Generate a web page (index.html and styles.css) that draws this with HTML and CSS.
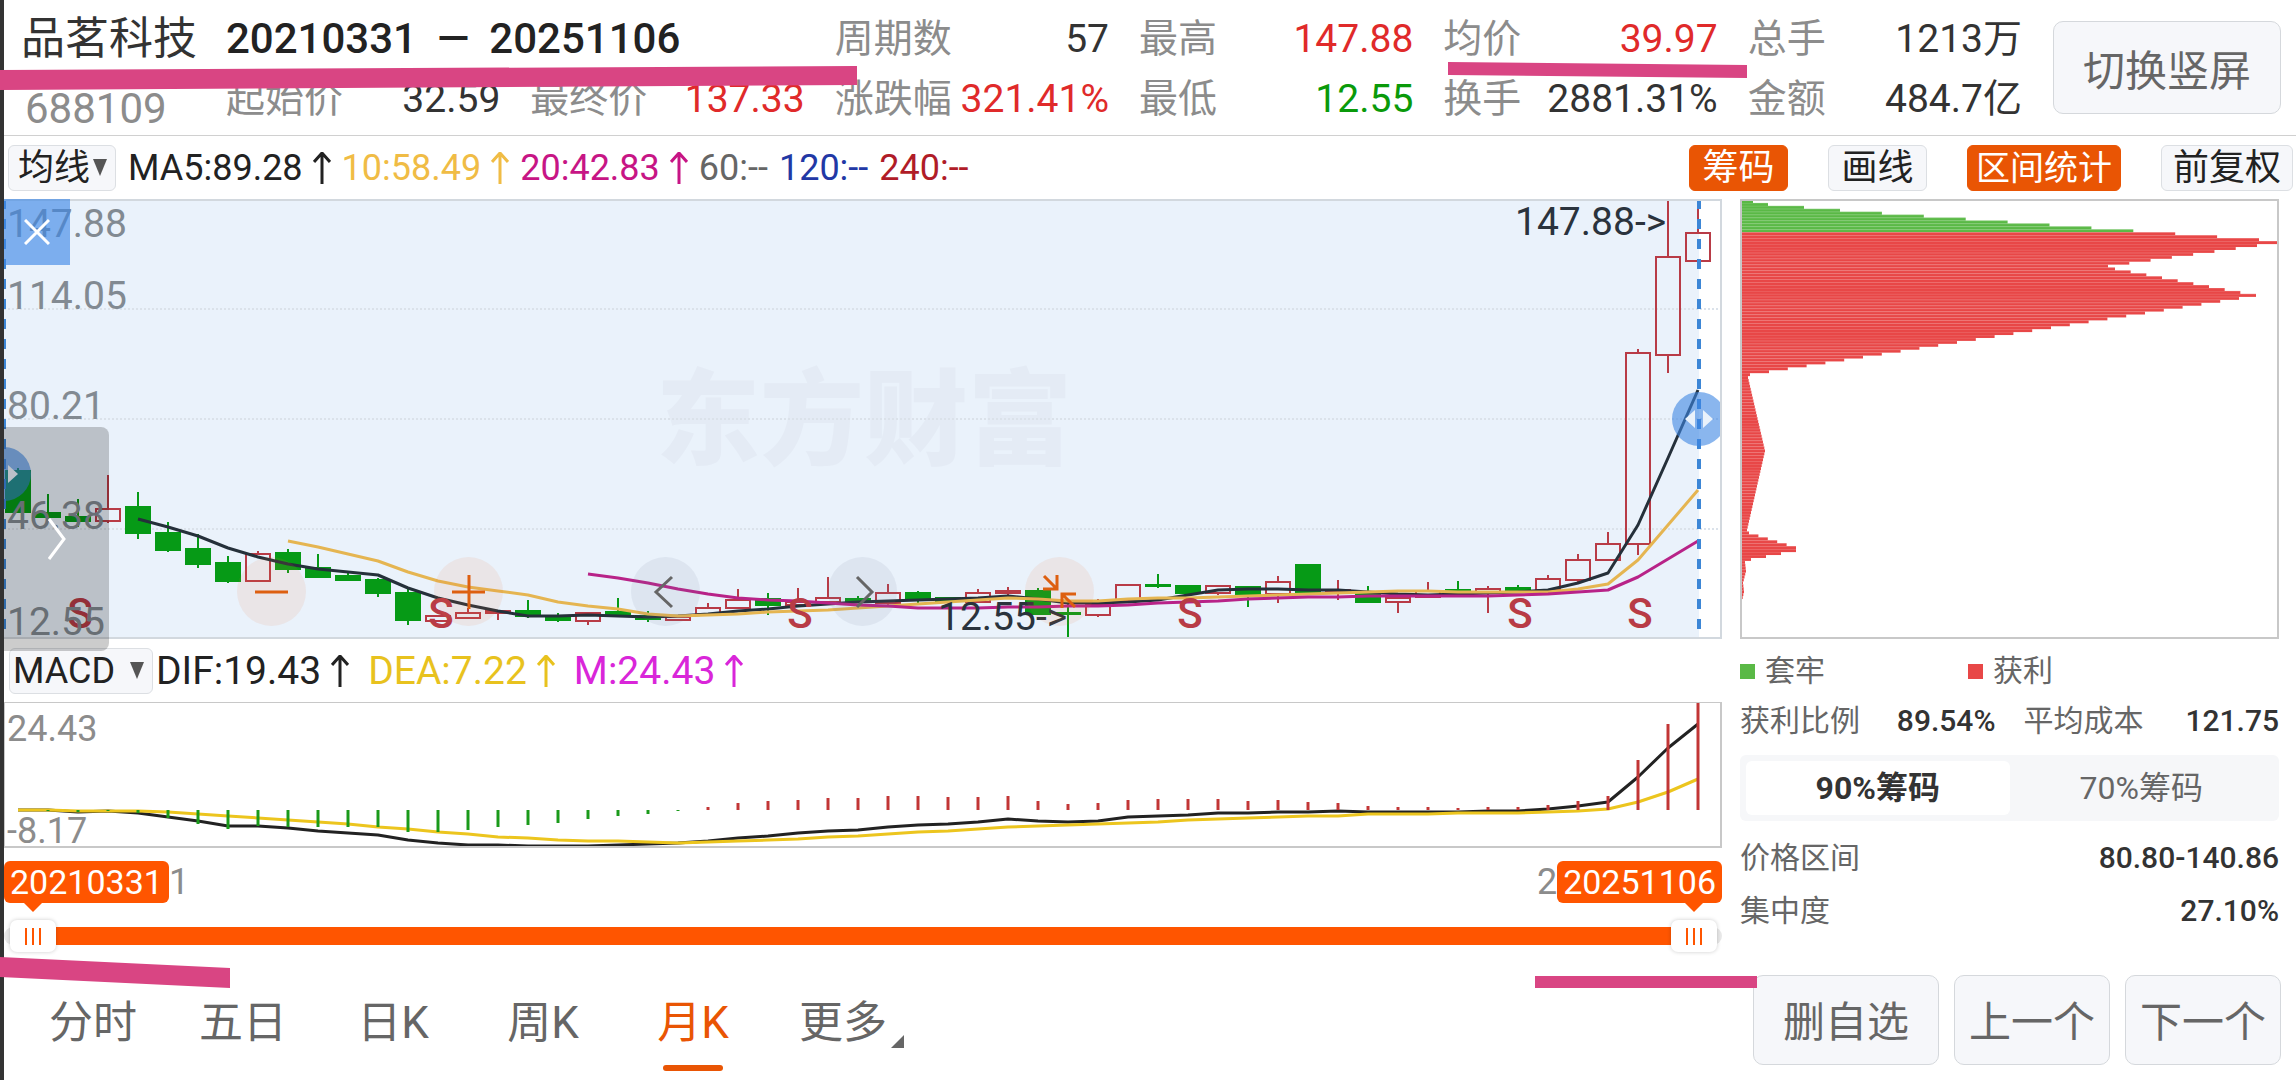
FILE: index.html
```html
<!DOCTYPE html>
<html lang="zh-CN">
<head>
  <meta charset="UTF-8" />
  <meta name="viewport" content="width=device-width, initial-scale=1" />
  <title>品茗科技 688109 - 区间统计</title>
  <link rel="stylesheet" href="styles.css">
</head>
<body>
  <div class="app">
    <!-- HEADER -->
    <header class="header">
      <div class="stock">
        <div class="stock-name">品茗科技</div>
        <div class="stock-code">688109</div>
      </div>
      <div class="stats">
        <div class="period"><span>20210331</span><span>—</span><span>20251106</span></div>
        <div class="stat"><span>周期数</span><b>57</b></div>
        <div class="stat"><span>最高</span><b class="up">147.88</b></div>
        <div class="stat"><span>均价</span><b class="up">39.97</b></div>
        <div class="stat"><span>总手</span><b>1213万</b></div>
        <div class="stat"><span>起始价</span><b>32.59</b></div>
        <div class="stat"><span>最终价</span><b class="up">137.33</b></div>
        <div class="stat"><span>涨跌幅</span><b class="up">321.41%</b></div>
        <div class="stat"><span>最低</span><b class="down">12.55</b></div>
        <div class="stat"><span>换手</span><b>2881.31%</b></div>
        <div class="stat"><span>金额</span><b>484.7亿</b></div>
      </div>
      <button class="btn rotate-btn">切换竖屏</button>
    </header>

    <!-- MA TOOLBAR -->
    <div class="toolbar">
      <div class="select select-ma">
        <select aria-label="主图指标"><option>均线</option></select>
      </div>
      <div class="legend">
        <span class="ma5">MA5:89.28<svg class="arrow" viewBox="0 0 18 32"><path d="M9 32V1M1 10L9 1L17 10" /></svg></span>
        <span class="ma10">10:58.49<svg class="arrow" viewBox="0 0 18 32"><path d="M9 32V1M1 10L9 1L17 10" /></svg></span>
        <span class="ma20">20:42.83<svg class="arrow" viewBox="0 0 18 32"><path d="M9 32V1M1 10L9 1L17 10" /></svg></span>
        <span class="ma60">60:--</span>
        <span class="ma120">120:--</span>
        <span class="ma240">240:--</span>
      </div>
      <div class="switches">
        <button class="tag active">筹码</button>
        <button class="tag">画线</button>
        <button class="tag tag-long active">区间统计</button>
        <button class="tag">前复权</button>
      </div>
    </div>

    <div class="main">
      <!-- CHARTS -->
      <section class="charts">
        <div class="price-chart">
          <svg id="priceSvg" viewBox="0 0 1718 440">
            <rect class="selected-area" width="1695" height="440" />
            <text class="watermark" x="652" y="258">东方财富</text>
            <path class="grid-line" d="M0 110H1718M0 220H1718M0 330H1718" />
            <g id="candles"></g>
            <g id="maLines"></g>
            <g class="sell">
              <text x="76" y="429">S</text>
              <text x="437" y="429">S</text>
              <text x="796" y="429">S</text>
              <text x="1186" y="429">S</text>
              <text x="1516" y="429">S</text>
              <text x="1636" y="429">S</text>
            </g>
            <text class="mark" x="1511" y="36">147.88-&gt;</text>
            <text class="mark" x="934" y="431">12.55-&gt;</text>
            <g class="axis">
              <text x="3" y="38">147.88</text>
              <text x="3" y="110">114.05</text>
              <text x="3" y="220">80.21</text>
              <text x="3" y="330">46.38</text>
              <text x="3" y="436">12.55</text>
            </g>
            <path class="range-line" d="M0 0V440M1695 0V440" />
            <circle class="handle" cx="0" cy="275" r="27" />
            <path class="handle-arrow" d="M4 266V284L14 275Z" />
            <circle class="handle" cx="1695" cy="220" r="27" />
            <path class="handle-arrow" d="M1691 211V229L1681 220ZM1699 211V229L1709 220Z" />
            <path class="frame" d="M0 1H1717V439H0" />
          </svg>
          <button class="close-btn" aria-label="关闭">
            <svg width="26" height="26" viewBox="0 0 26 26"><path d="M1 1L25 25M25 1L1 25" /></svg>
          </button>
          <button class="drawer-btn" aria-label="展开">
            <svg width="18" height="42" viewBox="0 0 18 42"><path d="M1 1L16 21L1 41" /></svg>
          </button>
          <div class="chart-tools">
            <button class="round warm" aria-label="缩小"><svg viewBox="0 0 69 69"><path d="M18 35H51" /></svg></button>
            <button class="round warm" aria-label="放大"><svg viewBox="0 0 69 69"><path d="M18 35H51M35 18V52" /></svg></button>
            <button class="round" aria-label="左移"><svg viewBox="0 0 69 69"><path d="M41 20L25 35L41 50" /></svg></button>
            <button class="round" aria-label="右移"><svg viewBox="0 0 69 69"><path d="M29 20L44 35L29 50" /></svg></button>
            <button class="round warm" aria-label="收起"><svg viewBox="0 0 69 69"><path d="M19 19L32 32M32 18V32H18M50 50L37 37M51 37H37V51" /></svg></button>
          </div>
        </div>

        <div class="macd-bar">
          <div class="select select-macd">
            <select aria-label="副图指标"><option>MACD</option></select>
          </div>
          <div class="legend legend-macd">
            <span class="dif">DIF:19.43<svg class="arrow" viewBox="0 0 18 32"><path d="M9 32V1M1 10L9 1L17 10" /></svg></span>
            <span class="dea">DEA:7.22<svg class="arrow" viewBox="0 0 18 32"><path d="M9 32V1M1 10L9 1L17 10" /></svg></span>
            <span class="m">M:24.43<svg class="arrow" viewBox="0 0 18 32"><path d="M9 32V1M1 10L9 1L17 10" /></svg></span>
          </div>
        </div>

        <svg id="macdSvg" viewBox="0 0 1718 146">
          <g class="axis axis-small">
            <text x="3" y="39">24.43</text>
            <text x="3" y="141">-8.17</text>
          </g>
          <g id="macdLines"></g>
          <g id="macdBars"></g>
          <rect class="frame frame-grey" x="0" y="0" width="1717" height="145" />
        </svg>

        <div class="dates">
          <div class="date"><span class="badge">20210331</span>1</div>
          <div class="date date-end">2<span class="badge">20251106</span></div>
        </div>

        <div class="range">
          <div class="range-track"></div>
          <input type="range" min="0" max="56" value="0" aria-label="开始日期" />
          <input type="range" min="0" max="56" value="56" aria-label="结束日期" />
        </div>
      </section>

      <!-- CHIP DISTRIBUTION -->
      <aside class="chips">
        <svg id="chipSvg" viewBox="0 0 539 440">
          <g id="chipRows"></g>
          <rect class="chip-frame" x="1" y="1" width="537" height="438" />
        </svg>
        <div class="chip-legend">
          <span><i class="dot green"></i>套牢</span>
          <span><i class="dot red"></i>获利</span>
        </div>
        <div class="chip-pair">
          <div class="chip-row"><span>获利比例</span><b>89.54%</b></div>
          <div class="chip-row"><span>平均成本</span><b>121.75</b></div>
        </div>
        <div class="chip-tabs">
          <button class="chip-tab active">90%筹码</button>
          <button class="chip-tab">70%筹码</button>
        </div>
        <div class="chip-row chip-line"><span>价格区间</span><b>80.80-140.86</b></div>
        <div class="chip-row chip-line"><span>集中度</span><b>27.10%</b></div>
      </aside>
    </div>

    <!-- FOOTER -->
    <footer class="footer">
      <nav class="tabs">
        <button class="tab">分时</button>
        <button class="tab">五日</button>
        <button class="tab">日K</button>
        <button class="tab">周K</button>
        <button class="tab active">月K</button>
        <button class="tab more">更多</button>
      </nav>
      <div class="actions">
        <button class="btn btn-wide">删自选</button>
        <button class="btn">上一个</button>
        <button class="btn">下一个</button>
      </div>
    </footer>

    <!-- highlighter strokes -->
    <svg class="strokes" viewBox="0 0 2296 1080">
      <path d="M0 70L857 66V85L0 90Z" />
      <path d="M1448 62L1747 65V78L1448 75Z" />
      <path d="M0 957L230 968V988L0 977Z" />
      <path d="M1535 976H1757V988H1535Z" />
    </svg>
  </div>
  <script src="chart.js"></script>
</body>
</html>
```

FILE: styles.css
```css
* {
  box-sizing: border-box;
}
body {
  margin: 0;
  background: #fff;
  color: #333;
  font-family: Roboto, "Noto Sans CJK SC", sans-serif;
}
button, select {
  font-family: inherit;
  color: inherit;
  margin: 0;
  padding: 0;
  border: none;
  background: none;
  cursor: pointer;
}
b {
  font-weight: 400;
}
svg {
  display: block;
}
.app {
  position: relative;
  min-height: 100vh;
  border-left: 4px solid #333;
}

/* header */
.header {
  display: flex;
  align-items: flex-start;
  height: 136px;
  padding: 0 15px 0 17px;
  border-bottom: 1px solid #d0d0d0;
}
.stock {
  flex: none;
  width: 205px;
  padding-top: 4px;
  line-height: 70px;
}
.stock-name {
  font-size: 44px;
}
.stock-code {
  padding-left: 4px;
  font-size: 42px;
  color: #8c8c8c;
}
.stats {
  flex: 1;
  display: grid;
  grid-template-columns: repeat(6, 1fr);
  column-gap: 30px;
  padding-top: 9px;
  font-size: 39px;
  line-height: 60px;
  white-space: nowrap;
}
.stat {
  display: flex;
  justify-content: space-between;
}
.stat span {
  color: #8c8c8c;
}
.stat .up {
  color: #e02a2a;
}
.stat .down {
  color: #0a9a0a;
}
.period {
  grid-column: span 2;
  display: flex;
  gap: 20px;
  font-size: 42px;
  font-weight: 500;
  color: #222;
}
.btn {
  height: 90px;
  width: 156px;
  border: 1px solid #d5d8dc;
  border-radius: 10px;
  background: #f6f7fa;
  color: #666;
  font-size: 42px;
}
.rotate-btn {
  flex: none;
  width: 228px;
  height: 93px;
  margin: 21px 0 0 31px;
}

/* toolbar */
.toolbar {
  display: flex;
  align-items: center;
  height: 63px;
  padding: 0 3px 0 4px;
}
.select {
  position: relative;
  flex: none;
  height: 46px;
}
.select select {
  width: 100%;
  height: 100%;
  padding: 0 9px;
  appearance: none;
  border: 1px solid #dcdfe3;
  border-radius: 6px;
  background: #f6f7fa;
  color: #222;
  font-size: 36px;
}
.select::after {
  content: "";
  position: absolute;
  right: 9px;
  top: 14px;
  border: 7px solid transparent;
  border-top: 17px solid #555;
  border-bottom: 0;
  pointer-events: none;
}
.select-ma {
  width: 108px;
}
.select-macd {
  width: 144px;
}
.select-macd select {
  padding: 0 3px;
}
.legend {
  display: flex;
  gap: 11px;
  margin-left: 12px;
  font-size: 36px;
  line-height: 46px;
  white-space: nowrap;
}
.legend span {
  display: flex;
  align-items: center;
}
.arrow {
  width: 18px;
  height: 32px;
  margin-left: 10px;
  fill: none;
  stroke: currentColor;
  stroke-width: 3;
}
.ma5, .dif {
  color: #222;
}
.ma10 {
  color: #f0bc45;
}
.ma20 {
  color: #c71585;
}
.ma60 {
  color: #666;
}
.ma120 {
  color: #2238a5;
}
.ma240 {
  color: #b01c28;
}
.switches {
  display: flex;
  gap: 40px;
  margin-left: auto;
}
.tag {
  min-width: 99px;
  height: 46px;
  padding: 0 11px;
  border: 1px solid #dcdfe3;
  border-radius: 6px;
  background: #f6f7fa;
  color: #222;
  font-size: 36px;
  line-height: 44px;
}
.tag-long {
  padding: 0 8px;
  font-size: 34px;
}
.tag.active {
  border-color: #e95504;
  background: #e95504;
  color: #fff;
}

/* charts */
.main {
  display: grid;
  grid-template-columns: 1718fr 539fr;
  column-gap: 18px;
  padding-right: 17px;
}
.price-chart {
  position: relative;
}
.charts > svg, .price-chart > svg, .chips > svg {
  width: 100%;
  height: auto;
}
.selected-area {
  fill: #eaf2fb;
}
.watermark {
  font-size: 104px;
  font-weight: 900;
  fill: #e4ebf5;
}
.grid-line {
  stroke: #dbe2ea;
  stroke-width: 2;
  stroke-dasharray: 2 2;
}
.frame {
  fill: none;
  stroke: #d2d8de;
  stroke-width: 2;
}
.frame-grey {
  stroke: #c8c8c8;
}
.axis {
  font-size: 39px;
  fill: #828a92;
}
.axis-small {
  font-size: 36px;
  fill: #8c8c8c;
}
.mark {
  font-size: 39px;
  fill: #2a333d;
}
.sell {
  font-size: 42px;
  font-weight: 500;
  fill: #b83b46;
  text-anchor: middle;
}
.candle-up {
  fill: none;
  stroke: #b83b46;
  stroke-width: 2;
}
.candle-down {
  fill: #069a16;
  stroke: #069a16;
  stroke-width: 2;
}
.line {
  fill: none;
  stroke-width: 3;
  stroke-linejoin: round;
}
.line-black {
  stroke: #25303a;
}
.line-gold {
  stroke: #e5b551;
}
.line-purple {
  stroke: #b82388;
}
.line-dif {
  stroke: #222;
}
.line-dea {
  stroke: #ecc51e;
}
.bar-up {
  stroke: #c23636;
  stroke-width: 3;
}
.bar-down {
  stroke: #1a9a1a;
  stroke-width: 3;
}
.range-line {
  stroke: #3c86d6;
  stroke-width: 4;
  stroke-dasharray: 10 10;
}
.handle {
  fill: #3c85e3;
  fill-opacity: 0.6;
}
.handle-arrow {
  fill: #eaf2fb;
}
.close-btn {
  position: absolute;
  left: 0;
  top: 0;
  width: 66px;
  height: 66px;
  display: grid;
  place-items: center;
  background: rgba(60, 135, 230, 0.63);
}
.close-btn svg, .drawer-btn svg {
  fill: none;
  stroke: #fff;
  stroke-width: 3;
}
.drawer-btn {
  position: absolute;
  z-index: 2;
  left: 0;
  top: 228px;
  width: 105px;
  height: 224px;
  display: grid;
  place-items: center;
  border-radius: 0 8px 8px 0;
  background: rgba(0, 0, 0, 0.2);
}
.chart-tools {
  position: absolute;
  left: 233px;
  top: 358px;
  display: flex;
  gap: 128px;
}
.round {
  width: 69px;
  height: 69px;
  border-radius: 50%;
  background: rgba(110, 120, 150, 0.1);
  color: #666;
}
.round svg {
  fill: none;
  stroke: currentColor;
  stroke-width: 3;
}
.round.warm {
  background: rgba(240, 120, 60, 0.1);
  color: #dd5f10;
}
.macd-bar {
  display: flex;
  align-items: center;
  height: 63px;
  padding-left: 5px;
}
.legend-macd {
  gap: 19px;
  margin-left: 3px;
  font-size: 39px;
}
.dea {
  color: #e8c21e;
}
.m {
  color: #d926d9;
}

/* dates and range slider */
.dates {
  display: flex;
  justify-content: space-between;
  padding-top: 13px;
  height: 66px;
  font-size: 36px;
  line-height: 42px;
  color: #8c8c8c;
}
.date {
  display: flex;
  height: 42px;
}
.badge {
  position: relative;
  padding: 0 6px;
  border-radius: 6px;
  background: #ff5500;
  color: #fff;
  font-size: 34px;
}
.badge::after {
  content: "";
  position: absolute;
  left: 20px;
  top: 42px;
  border: 9px solid transparent;
  border-top-color: #ff5500;
  border-bottom: 0;
}
.date-end .badge::after {
  left: auto;
  right: 19px;
}
.range {
  position: relative;
  height: 44px;
}
.range-track {
  position: absolute;
  left: 30px;
  right: 30px;
  top: 13px;
  height: 18px;
  background: #ff5500;
}
.range::before {
  content: "";
  position: absolute;
  left: 0;
  right: 0;
  top: 13px;
  height: 18px;
  border-radius: 9px;
  background: #e9e9e9;
}
.range input {
  position: absolute;
  left: 6px;
  top: 6px;
  width: calc(100% - 11px);
  height: 32px;
  margin: 0;
  appearance: none;
  background: none;
  pointer-events: none;
}
.range input::-webkit-slider-thumb {
  appearance: none;
  width: 46px;
  height: 32px;
  border-radius: 7px;
  box-shadow: 0 0 4px rgba(0, 0, 0, 0.2);
  background:
    linear-gradient(#ff5500, #ff5500) 15px 8px / 2px 17px no-repeat,
    linear-gradient(#ff5500, #ff5500) 22px 8px / 2px 17px no-repeat,
    linear-gradient(#ff5500, #ff5500) 29px 8px / 2px 17px no-repeat,
    #fff;
  pointer-events: auto;
}

/* chip panel */
.chip-frame {
  fill: none;
  stroke: #c8c8c8;
  stroke-width: 2;
}
.chip-green {
  fill: #5ab946;
}
.chip-red {
  fill: #e84747;
}
.chip-gap {
  fill: #fff;
  fill-opacity: 0.15;
}
.chips {
  font-size: 30px;
  color: #666;
}
.chip-legend {
  display: flex;
  margin-top: 9px;
  line-height: 46px;
}
.chip-legend span {
  display: flex;
  align-items: center;
  gap: 10px;
  width: 228px;
}
.dot {
  width: 15px;
  height: 15px;
}
.dot.green {
  background: #5ab946;
}
.dot.red {
  background: #e84747;
}
.chip-pair {
  display: grid;
  grid-template-columns: 1fr 1fr;
  column-gap: 28px;
}
.chip-row {
  display: flex;
  justify-content: space-between;
  line-height: 53px;
}
.chip-row b {
  font-weight: 500;
  color: #333;
}
.chip-tabs {
  display: flex;
  height: 66px;
  margin: 8px 0 10px;
  padding: 6px;
  border-radius: 6px;
  background: #f6f7f9;
}
.chip-tab {
  flex: 1;
  border-radius: 6px;
  font-size: 32px;
  line-height: 54px;
}
.chip-tab.active {
  background: #fff;
  color: #333;
  font-weight: 700;
}

/* footer */
.footer {
  display: flex;
  justify-content: space-between;
  padding: 17px 15px 0 14px;
}
.tabs {
  display: flex;
}
.tab {
  position: relative;
  width: 150px;
  height: 96px;
  padding-bottom: 8px;
  color: #666;
  font-size: 44px;
}
.tab.active {
  color: #e95504;
}
.tab.active::after {
  content: "";
  position: absolute;
  left: 45px;
  bottom: 0;
  width: 60px;
  height: 6px;
  border-radius: 3px;
  background: #e95504;
}
.more::after {
  content: "";
  position: absolute;
  right: 14px;
  bottom: 23px;
  border-left: 13px solid transparent;
  border-bottom: 13px solid #666;
}
.actions {
  display: flex;
  gap: 15px;
}
.actions .btn {
  padding-bottom: 4px;
}
.btn-wide {
  width: 186px;
}
.strokes {
  position: absolute;
  z-index: 3;
  left: -4px;
  top: 0;
  width: calc(100% + 4px);
  fill: #d94583;
  pointer-events: none;
}
```

FILE: chart.js
```js
const STEP = 30;
const FIRST = 14;

// [dir, bodyTop, bodyBottom, high, low]
const candles = [
  ["d",272,313,269,314],["d",314,318,295,318],["d",318,322,300,328],["u",310,322,276,324],
  ["d",308,334,293,340],["d",334,351,323,353],["d",350,365,335,369],["d",364,382,357,384],
  ["u",355,382,352,382],["d",354,370,350,374],["d",369,378,355,379],["d",377,381,373,382],
  ["d",381,394,379,398],["d",394,421,390,426],["u",417,422,417,422],["u",414,419,409,419],
  ["u",412,414,412,421],["d",412,417,401,419],["d",419,421,414,423],["u",414,422,413,426],
  ["d",413,416,399,416],["d",417,420,412,423],["u",418,421,418,421],["u",409,415,404,415],
  ["u",401,409,390,409],["d",400,406,394,416],["u",403,406,389,406],["u",399,403,378,403],
  ["d",400,403,397,403],["u",394,404,385,408],["d",394,399,392,404],["d",399,402,399,402],
  ["u",394,403,390,403],["u",392,394,388,397],["d",392,415,389,415],["d",414,415,404,440],
  ["u",405,416,400,418],["u",386,401,386,401],["d",386,387,375,389],["d",387,394,387,394],
  ["u",387,394,387,396],["d",388,396,388,408],["u",383,395,377,404],["d",366,393,366,393],
  ["u",391,392,381,401],["d",395,403,387,403],["u",399,403,399,414],["u",392,398,383,398],
  ["d",391,393,382,398],["u",390,393,387,414],["d",389,393,386,393],["u",380,391,376,391],
  ["u",361,381,355,383],["u",345,361,333,361],["u",154,345,150,356],["u",58,156,0,174],
  ["u",34,62,6,68]
];

const ma5 = [320,328,337,349,358,365,370,373,376,389,399,406,412,417,417,416,417,418,417,415,412,410,407,405,403,402,401,400,399,397,400,404,404,403,401,396,391,390,390,391,391,393,395,396,395,394,393,391,384,374,326,259,191];
const ma10 = [342,348,355,362,373,382,388,392,396,403,407,410,415,417,416,415,413,412,411,409,407,405,403,401,399,400,402,402,400,399,399,398,397,396,395,394,393,392,392,393,393,393,393,390,385,361,326,291];
const ma20 = [375,379,384,390,395,399,401,402,404,406,407,409,409,409,408,408,407,407,406,404,403,402,400,399,398,398,397,397,397,397,397,396,395,393,391,378,360,342];

const dif = [108,108,110,109,111,115,119,124,124,126,129,131,133,138,141,143,143,144,144,144,143,142,141,139,136,134,131,129,128,125,123,122,120,117,119,120,119,115,114,113,111,111,110,110,109,110,110,110,110,109,109,107,104,100,75,46,22];
const dea = [108,108,109,109,109,110,112,114,116,118,120,122,125,127,130,132,135,136,138,139,139,140,141,140,139,138,137,135,134,132,130,129,127,125,124,123,122,121,120,118,117,116,115,114,114,112,112,112,111,111,111,110,109,107,100,90,77];
const macd = [108,109,110,109,111,116,122,127,124,125,125,125,125,130,130,128,125,123,121,117,114,112,109,105,101,99,98,96,96,94,94,95,95,94,99,102,101,98,97,97,97,99,98,100,101,104,105,105,106,105,105,103,99,94,58,22,0];
const ZERO = 108;

// [row, width] corners of the chip distribution
const chipShape = [[0,12],[1,27],[3,99],[13,518],[14,537],[15,516],[22,367],[23,374],[32,515],[33,498],[58,28],[59,9],[60,7],[85,24],[112,6],[113,8],[118,55],[119,55],[122,10],[123,4],[126,5],[130,2],[133,3],[136,1],[140,0]];
const CHIP_ROW = 440 / 150;
const TRAPPED_ROWS = 11;

function xAt(i) {
  return FIRST + i * STEP;
}

function drawCandles() {
  let html = "";
  candles.forEach(([dir, top, bottom, high, low], i) => {
    const x = xAt(i);
    const cls = dir === "u" ? "candle-up" : "candle-down";
    html += `<path class="${cls}" d="M${x} ${high}V${top}M${x} ${bottom}V${low}M${x - 12} ${top}H${x + 12}V${bottom}H${x - 12}Z" />`;
  });
  document.getElementById("candles").innerHTML = html;
}

function line(values, start, cls) {
  const points = values.map((y, i) => `${xAt(i + start)},${y}`).join(" ");
  return `<polyline class="line ${cls}" points="${points}" />`;
}

function drawMacd() {
  document.getElementById("macdLines").innerHTML = line(dif, 0, "line-dif") + line(dea, 0, "line-dea");
  document.getElementById("macdBars").innerHTML = macd.map((y, i) =>
    `<path class="${y > ZERO ? "bar-down" : "bar-up"}" d="M${xAt(i)} ${ZERO}V${y}" />`
  ).join("");
}

function drawChips() {
  let html = "";
  for (let s = 0; s < chipShape.length - 1; s++) {
    const [r0, w0] = chipShape[s];
    const [r1, w1] = chipShape[s + 1];
    for (let r = r0; r < r1; r++) {
      const w = w0 + (w1 - w0) * (r - r0) / (r1 - r0);
      const y = r * CHIP_ROW + 1;
      html += `<rect class="${r < TRAPPED_ROWS ? "chip-green" : "chip-red"}" x="1" y="${y}" width="${w}" height="${CHIP_ROW + 0.1}" />`;
      html += `<rect class="chip-gap" x="1" y="${y}" width="${w}" height="0.8" />`;
    }
  }
  document.getElementById("chipRows").innerHTML = html;
}

drawCandles();
document.getElementById("maLines").innerHTML =
  line(ma5, 4, "line-black") + line(ma10, 9, "line-gold") + line(ma20, 19, "line-purple");
drawMacd();
drawChips();
```
